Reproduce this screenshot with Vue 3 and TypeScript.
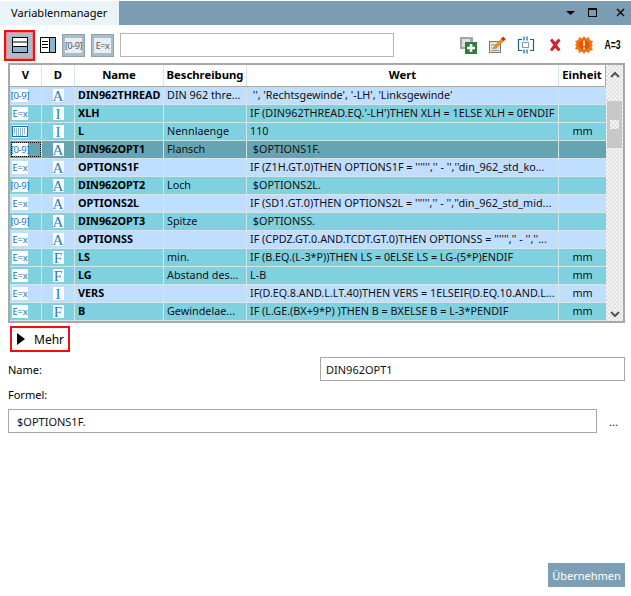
<script setup lang="ts">
interface Row { v: 'num' | 'exp' | 'kbd'; d: string; name: string; desc: string; val: string; unit: string; cls: string }
const rows: Row[] = [
  { v: 'num', d: 'A', name: 'DIN962THREAD', desc: 'DIN 962 thre...', val: " '', 'Rechtsgewinde', '-LH', 'Linksgewinde'", unit: '', cls: 'light' },
  { v: 'exp', d: 'I', name: 'XLH', desc: '', val: "IF (DIN962THREAD.EQ.'-LH')THEN XLH = 1ELSE XLH = 0ENDIF", unit: '', cls: 'teal' },
  { v: 'kbd', d: 'I', name: 'L', desc: 'Nennlaenge', val: '110', unit: 'mm', cls: 'teal' },
  { v: 'num', d: 'A', name: 'DIN962OPT1', desc: 'Flansch', val: ' $OPTIONS1F.', unit: '', cls: 'sel' },
  { v: 'exp', d: 'A', name: 'OPTIONS1F', desc: '', val: "IF (Z1H.GT.0)THEN OPTIONS1F = '''''','' - '',''din_962_std_ko...", unit: '', cls: 'light' },
  { v: 'num', d: 'A', name: 'DIN962OPT2', desc: 'Loch', val: ' $OPTIONS2L.', unit: '', cls: 'teal' },
  { v: 'exp', d: 'A', name: 'OPTIONS2L', desc: '', val: "IF (SD1.GT.0)THEN OPTIONS2L = '''''','' - '',''din_962_std_mid...", unit: '', cls: 'light' },
  { v: 'num', d: 'A', name: 'DIN962OPT3', desc: 'Spitze', val: ' $OPTIONSS.', unit: '', cls: 'teal' },
  { v: 'exp', d: 'A', name: 'OPTIONSS', desc: '', val: "IF (CPDZ.GT.0.AND.TCDT.GT.0)THEN OPTIONSS = '''''','' - '',''...", unit: '', cls: 'light' },
  { v: 'exp', d: 'F', name: 'LS', desc: 'min.', val: 'IF (B.EQ.(L-3*P))THEN LS = 0ELSE LS = LG-(5*P)ENDIF', unit: 'mm', cls: 'teal' },
  { v: 'exp', d: 'F', name: 'LG', desc: 'Abstand des...', val: 'L-B', unit: 'mm', cls: 'teal' },
  { v: 'exp', d: 'I', name: 'VERS', desc: '', val: 'IF(D.EQ.8.AND.L.LT.40)THEN VERS = 1ELSEIF(D.EQ.10.AND.L...', unit: 'mm', cls: 'light' },
  { v: 'exp', d: 'F', name: 'B', desc: 'Gewindelae...', val: 'IF (L.GE.(BX+9*P) )THEN B = BXELSE B = L-3*PENDIF', unit: 'mm', cls: 'teal' },
]
</script>

<template>
  <div class="app">
    <div class="tabbar">
      <div class="tab">Variablenmanager</div>
      <div class="winbtns">
        <svg class="w1" width="12" height="12" viewBox="0 0 12 12"><path d="M1 4h9L5.5 8z" fill="#000" /></svg>
        <svg class="w2" width="12" height="12" viewBox="0 0 12 12"><rect x="1.5" y="1.5" width="8" height="8" fill="none" stroke="#000" /><path d="M1 2h9" stroke="#000" stroke-width="2" /></svg>
        <svg class="w3" width="12" height="12" viewBox="0 0 12 12"><path d="M2 2l7 7M9 2l-7 7" stroke="#000" stroke-width="1.4" /></svg>
      </div>
    </div>

    <div class="toolbar">
      <div class="tl">
        <span class="redbox">
          <svg width="18" height="18" viewBox="0 0 18 18"><rect x="1.5" y="1.5" width="15" height="15" fill="#fff" stroke="#000" /><rect x="2" y="11" width="14" height="5" fill="#8db3d0" /><path d="M2 6h14M2 10.5h14" stroke="#000" /><path d="M3.5 3.5h11" stroke="#000" opacity="0" /></svg>
        </span>
        <svg class="ic2" width="18" height="18" viewBox="0 0 18 18"><rect x="1.5" y="1.5" width="15" height="15" fill="#fff" stroke="#000" /><rect x="11" y="2" width="5" height="14" fill="#8db3d0" /><path d="M10.5 2v14M3 5.5h6M3 8.5h6M3 11.5h6" stroke="#000" /></svg>
        <span class="tbtn num"><span class="inner">[0-9]</span></span>
        <span class="tbtn exp"><span class="inner">E=x</span></span>
        <input class="search" />
      </div>
      <div class="tr">
        <svg width="18" height="18" viewBox="0 0 18 18"><rect x="1" y="1" width="13" height="12" fill="#a6a6a6" /><rect x="3" y="3" width="8" height="8" fill="#e2e2e2" /><rect x="6" y="6" width="12" height="12" fill="#2f7d34" /><path d="M12 8v8M8 12h8" stroke="#fff" stroke-width="2.6" /></svg>
        <svg width="18" height="18" viewBox="0 0 18 18"><rect x="1.5" y="5.5" width="11" height="11" fill="#e6e6e0" stroke="#777" /><path d="M3 9h5M3 12h3M3 14.5h8" stroke="#999" /><path d="M5 13.5l1-3.5 8-8 2.5 2.5-8 8z" fill="#f08a24" /><path d="M13 3l2-2.5 2.8 2.5-2 2z" fill="#cc2b1d" /></svg>
        <svg width="18" height="18" viewBox="0 0 18 18" fill="none"><path d="M5 3.5H1.5v11H5M13 3.5h3.5v11H13" stroke="#1f5f94" stroke-width="1.2" /><rect x="5.5" y="6.5" width="6" height="5" fill="#fff" stroke="#889aa8" /><path d="M6 2.5h5.500M6 15.500h5.500" stroke="#6fa0cc" stroke-width="4" stroke-dasharray="2 1" /></svg>
        <svg width="18" height="18" viewBox="0 0 18 18"><path d="M4 4.500l2-2 3.200 3.500L12.500 2.500l2 2L11 9l3.500 4.500-2 2L9.200 12 6 15.500l-2-2L7.300 9z" fill="#d2222a" /></svg>
        <svg width="18" height="18" viewBox="0 0 18 18"><path d="M9 0l2 2.500L14 1l.8 3.200 3.200.8-1.500 3L18 9l-1.500 2 1.500 3-3.200.8L14 17l-3-1.500L9 18l-2-2.500L4 17l-.8-3.200L0 13l1.500-3L0 9l1.500-2L0 5l3.200-.8L4 1l3 1.500z" fill="#f0720c" /><circle cx="9" cy="9" r="5" fill="#e5530c" /><path d="M9 4.500v5.500M9 11.500v2" stroke="#ffe6a8" stroke-width="2" /></svg>
        <span class="aeq">A=3</span>
      </div>
    </div>

    <div class="tablewrap">
      <div class="tablemain">
        <div class="row head">
          <div class="c cv">V</div><div class="c cd">D</div><div class="c cn">Name</div>
          <div class="c cb beschr">Beschreibung</div><div class="c cw">Wert</div><div class="c cu">Einheit</div>
        </div>
        <div v-for="r in rows" :key="r.name" class="row" :class="r.cls">
          <div class="c cv">
            <span class="vfocus" :class="{ focus: r.cls === 'sel' }">
              <span class="vicon">
                <template v-if="r.v === 'num'">[0-9]</template>
                <template v-else-if="r.v === 'exp'">E=x</template>
                <svg v-else width="16" height="11" viewBox="0 0 16 11"><rect x=".5" y=".5" width="15" height="10" fill="#fff" stroke="#1a6fb5" /><path d="M2 3h12M2 5h12M2 7h12M4 9h8" stroke="#1a6fb5" stroke-dasharray="1 1" /></svg>
              </span>
            </span>
          </div>
          <div class="c cd"><span class="dicon">{{ r.d }}</span></div>
          <div class="c cn name">{{ r.name }}</div>
          <div class="c cb desc">{{ r.desc }}</div>
          <div class="c cw val">{{ r.val }}</div>
          <div class="c cu unit">{{ r.unit }}</div>
        </div>
      </div>
      <div class="scroll">
        <svg class="up" width="12" height="8" viewBox="0 0 12 8"><path d="M2 6l4-4 4 4" fill="none" stroke="#555" stroke-width="2" /></svg>
        <div class="thumb"><span class="grip"></span></div>
        <svg class="down" width="12" height="8" viewBox="0 0 12 8"><path d="M2 2l4 4 4-4" fill="none" stroke="#555" stroke-width="2" /></svg>
      </div>
    </div>

    <div class="mehr">
      <svg width="8" height="12" viewBox="0 0 8 12"><path d="M0 0l8 6-8 6z" fill="#000" /></svg>
      <span>Mehr</span>
    </div>

    <div class="namerow">
      <label>Name:</label>
      <input class="field namefield" value="DIN962OPT1" />
    </div>
    <div class="formlabel">Formel:</div>
    <div class="formrow">
      <input class="field formfield" value="$OPTIONS1F." />
      <span class="dots">...</span>
    </div>
    <div class="footer">
      <button class="apply">Übernehmen</button>
    </div>
  </div>
</template>

<style scoped>
.app {
  width: 631px;
  height: 596px;
  background: #fff;
  font-family: "Noto Sans", "Open Sans", sans-serif;
  font-size: 11px;
  color: #000;
  display: flex;
  flex-direction: column;
  overflow: hidden;
}
.tabbar {
  margin-top: 1px;
  height: 24px;
  flex: none;
  background: #7b9db4;
  display: flex;
  justify-content: space-between;
}
.tab {
  width: 119px;
  background: #e9f3f8;
  font-size: 11px;
  letter-spacing: 0.05px;
  line-height: 24px;
  padding-left: 11px;
  box-sizing: border-box;
}
.winbtns {
  display: flex;
  align-items: center;
  padding-right: 4px;
}
.w2 { margin-left: 10px; }
.w3 { margin-left: 16px; }
.toolbar {
  height: 38px;
  flex: none;
  box-sizing: border-box;
  display: flex;
  justify-content: space-between;
  align-items: center;
  padding: 2px 10px 0 4px;
}
.tl, .tr { display: flex; align-items: center; }
.tr { gap: 11px; }
.redbox {
  width: 31px;
  height: 31px;
  box-sizing: border-box;
  border: 2px solid #f01010;
  background: #a9bcc9;
  box-shadow: inset 0 0 0 1px #e88;
  display: flex;
  align-items: center;
  justify-content: center;
}
.ic2 { margin-left: 4px; }
.tbtn {
  width: 23px;
  height: 23px;
  box-sizing: border-box;
  background: #a9bcc9;
  border: 1px solid #8f9fac;
  display: flex;
  align-items: center;
  justify-content: center;
  overflow: hidden;
}
.num { margin-left: 5px; }
.exp { margin-left: 6px; }
.inner {
  width: 17px;
  height: 15px;
  background: #e8eef4;
  font-size: 9px;
  color: #555;
  line-height: 15px;
  text-align: center;
  letter-spacing: -0.4px;
  white-space: nowrap;
}
.search {
  margin-left: 6px;
  width: 274px;
  height: 24px;
  box-sizing: border-box;
  border: 1px solid #b4b4b4;
  background: #fff;
  outline: none;
}
.aeq {
  font-family: "Liberation Sans", sans-serif;
  font-weight: 700;
  font-size: 12px;
  width: 17px;
  display: flex;
  justify-content: center;
  transform: scaleX(0.72);
  white-space: nowrap;
}
.tablewrap {
  margin-left: 8px;
  width: 617px;
  height: 260px;
  flex: none;
  box-sizing: border-box;
  border: 2px solid #a8a8a8;
  display: flex;
  background: #fff;
}
.tablemain { width: 596px; flex: none; }
.row {
  display: flex;
  height: 18px;
  box-sizing: border-box;
  border-bottom: 1px solid #d5e6ea;
  font-size: 10.8px;
}
.row.head {
  height: 22px;
  background: #fff;
  border-bottom: 1px solid #a8a8a8;
  font-weight: 700;
  font-size: 11.3px;
}
.head .c {
  justify-content: center;
  padding: 0 0 2px 0;
}
.head .cu { border-right: 1px solid #a8a8a8; }
.c {
  display: flex;
  align-items: center;
  box-sizing: border-box;
  border-right: 1px solid #d5e6ea;
  white-space: pre;
  overflow: hidden;
  flex: none;
  padding-left: 3px;
}
.name, .desc, .val, .unit { padding-bottom: 3px; }
.cv { width: 32px; padding-left: 1px; }
.cd { width: 33px; justify-content: center; padding-left: 0; }
.cn { width: 89px; }
.cb { width: 83px; }
.cw { width: 312px; }
.cu { width: 47px; justify-content: center; padding-left: 0; border-right: 0; }
.light { background: #c0deff; }
.teal { background: #7fd1e0; }
.sel { background: #65a5b3; }
.name { font-weight: 700; }
.desc, .val, .unit { color: #111; }
.vfocus {
  width: 30px;
  height: 15px;
  display: flex;
  align-items: center;
  padding-left: 1px;
  box-sizing: border-box;
}
.vfocus.focus { outline: 1px dotted #000; outline-offset: -1px; }
.vicon {
  width: 16px;
  height: 13px;
  background: #fff;
  color: #1a6fb5;
  font-size: 9.5px;
  letter-spacing: -0.3px;
  display: flex;
  align-items: center;
  justify-content: center;
  white-space: nowrap;
}
.dicon {
  width: 11px;
  height: 13px;
  background: #fff;
  color: #1a7fc0;
  font-family: "Liberation Serif", serif;
  font-size: 15px;
  line-height: 14px;
  text-align: center;
}
.scroll {
  flex: 1;
  background: repeating-conic-gradient(#e2e2e2 0 25%, #f4f4f4 0 50%) 0 0 / 4px 4px;
  display: flex;
  flex-direction: column;
  align-items: center;
  padding-top: 6px;
}
.up, .down { flex: none; }
.thumb {
  margin-top: 22px;
  width: 15px;
  height: 47px;
  background: #c8c8c8;
  display: flex;
  align-items: center;
  justify-content: center;
}
.grip {
  width: 9px;
  height: 9px;
  background: repeating-conic-gradient(#e2e2e2 0 25%, #f4f4f4 0 50%) 0 0 / 4px 4px;
}
.down { margin-top: auto; margin-bottom: 3px; }
.mehr {
  margin-left: 10px;
  margin-top: 3px;
  width: 60px;
  height: 26px;
  flex: none;
  box-sizing: border-box;
  border: 2px solid #f01010;
  display: flex;
  align-items: center;
  gap: 9px;
  padding-left: 5px;
  font-size: 12px;
}
.namerow {
  display: flex;
  align-items: center;
  justify-content: space-between;
  padding: 0 6px 0 8px;
  margin-top: 5px;
  height: 24px;
  flex: none;
}
.field {
  box-sizing: border-box;
  height: 24px;
  border: 1px solid #a8a8a8;
  outline: none;
  font: inherit;
  font-size: 11px;
  padding: 0 5px;
  color: #111;
}
.namefield { width: 305px; }
.formlabel {
  margin-left: 8px;
  margin-top: 4px;
  height: 20px;
  line-height: 20px;
  flex: none;
}
.formrow {
  display: flex;
  align-items: center;
  padding-left: 8px;
  margin-top: 4px;
  flex: none;
}
.formfield { width: 589px; padding-left: 8px; }
.dots { margin-left: 12px; color: #222; }
.footer {
  margin-top: auto;
  display: flex;
  justify-content: flex-end;
  padding: 0 6px 9px 0;
}
.apply {
  width: 77px;
  height: 24px;
  background: #7d9fb5;
  color: #fff;
  border: 0;
  font: inherit;
  font-size: 11px;
  padding: 0;
}
</style>
